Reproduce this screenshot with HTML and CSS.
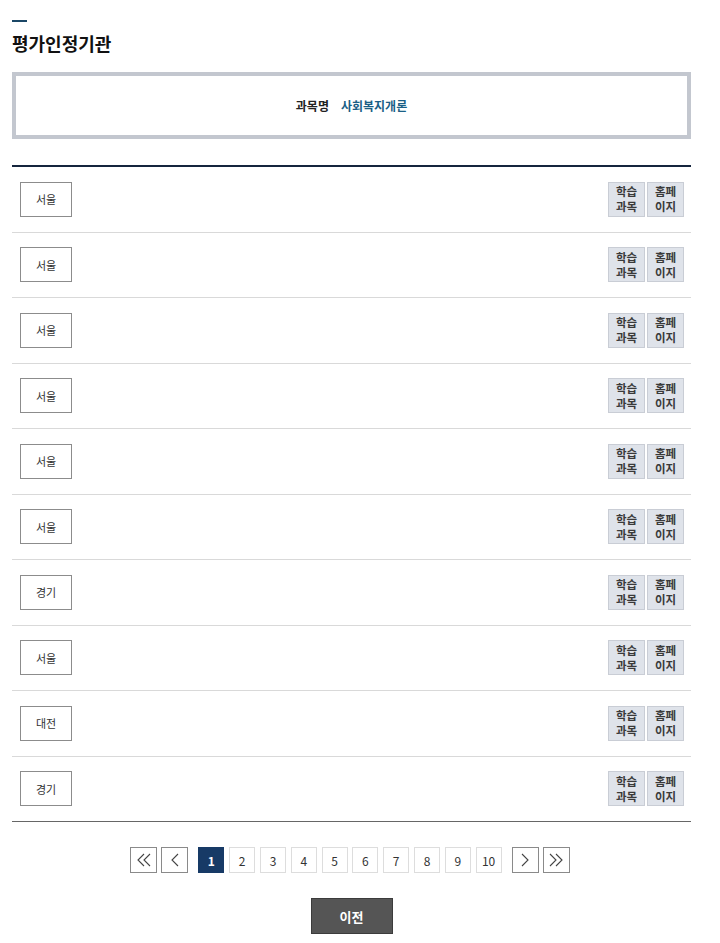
FILE: index.html
```html
<!DOCTYPE html>
<html>
<head>
    <meta charset="utf-8">
    <title>평가인정기관</title>
    <link rel="stylesheet" href="styles.css">
</head>
<body>
    <div class="wrap">
        <h1 class="title">평가인정기관</h1>

        <div class="subject-box">
            <span class="subject-label">과목명</span>
            <span class="subject-name">사회복지개론</span>
        </div>

        <ul class="org-list">
            <li class="org-row">
                <span class="region">서울</span>
                <div class="links"><a class="link-btn" href="#">학습<br>과목</a><a class="link-btn" href="#">홈페<br>이지</a></div>
            </li>
            <li class="org-row">
                <span class="region">서울</span>
                <div class="links"><a class="link-btn" href="#">학습<br>과목</a><a class="link-btn" href="#">홈페<br>이지</a></div>
            </li>
            <li class="org-row">
                <span class="region">서울</span>
                <div class="links"><a class="link-btn" href="#">학습<br>과목</a><a class="link-btn" href="#">홈페<br>이지</a></div>
            </li>
            <li class="org-row">
                <span class="region">서울</span>
                <div class="links"><a class="link-btn" href="#">학습<br>과목</a><a class="link-btn" href="#">홈페<br>이지</a></div>
            </li>
            <li class="org-row">
                <span class="region">서울</span>
                <div class="links"><a class="link-btn" href="#">학습<br>과목</a><a class="link-btn" href="#">홈페<br>이지</a></div>
            </li>
            <li class="org-row">
                <span class="region">서울</span>
                <div class="links"><a class="link-btn" href="#">학습<br>과목</a><a class="link-btn" href="#">홈페<br>이지</a></div>
            </li>
            <li class="org-row">
                <span class="region">경기</span>
                <div class="links"><a class="link-btn" href="#">학습<br>과목</a><a class="link-btn" href="#">홈페<br>이지</a></div>
            </li>
            <li class="org-row">
                <span class="region">서울</span>
                <div class="links"><a class="link-btn" href="#">학습<br>과목</a><a class="link-btn" href="#">홈페<br>이지</a></div>
            </li>
            <li class="org-row">
                <span class="region">대전</span>
                <div class="links"><a class="link-btn" href="#">학습<br>과목</a><a class="link-btn" href="#">홈페<br>이지</a></div>
            </li>
            <li class="org-row">
                <span class="region">경기</span>
                <div class="links"><a class="link-btn" href="#">학습<br>과목</a><a class="link-btn" href="#">홈페<br>이지</a></div>
            </li>
        </ul>

        <div class="paging">
            <div class="nav-group">
                <a class="nav-btn" href="#"><svg width="16" height="16" viewBox="0 0 16 16"><polyline points="8,2 2,8 8,14" /><polyline points="14,2 8,8 14,14" /></svg></a>
                <a class="nav-btn" href="#"><svg width="16" height="16" viewBox="0 0 16 16"><polyline points="11,2 5,8 11,14" /></svg></a>
            </div>
            <div class="pages">
                <a class="page on" href="#">1</a>
                <a class="page" href="#">2</a>
                <a class="page" href="#">3</a>
                <a class="page" href="#">4</a>
                <a class="page" href="#">5</a>
                <a class="page" href="#">6</a>
                <a class="page" href="#">7</a>
                <a class="page" href="#">8</a>
                <a class="page" href="#">9</a>
                <a class="page" href="#">10</a>
            </div>
            <div class="nav-group">
                <a class="nav-btn" href="#"><svg width="16" height="16" viewBox="0 0 16 16"><polyline points="5,2 11,8 5,14" /></svg></a>
                <a class="nav-btn" href="#"><svg width="16" height="16" viewBox="0 0 16 16"><polyline points="2,2 8,8 2,14" /><polyline points="8,2 14,8 8,14" /></svg></a>
            </div>
        </div>

        <div class="bottom">
            <a class="prev-btn" href="#">이전</a>
        </div>
    </div>
</body>
</html>
```

FILE: styles.css
```css
body {
    margin: 0;
    padding: 0;
    background: #fff;
    font-family: "Noto Sans CJK KR", "Noto Sans", sans-serif;
    color: #222;
}
a {
    text-decoration: none;
    color: inherit;
}
.wrap {
    width: 679px;
    margin-left: 12px;
    padding-top: 20px;
}
.title {
    margin: 0;
    font-size: 18px;
    font-weight: bold;
    line-height: 25px;
    color: #111;
}
.title::before {
    content: "";
    display: block;
    width: 15px;
    height: 2px;
    background: #1b4766;
    margin-bottom: 9px;
}
.subject-box {
    margin-top: 16px;
    height: 67px;
    box-sizing: border-box;
    border: 4px solid #c3c7cf;
    display: flex;
    justify-content: center;
    align-items: center;
    gap: 12px;
    font-size: 12px;
    font-weight: bold;
}
.subject-label {
    color: #222;
}
.subject-name {
    color: #1a5f86;
}
.org-list {
    list-style: none;
    margin: 26px 0 0;
    padding: 0;
    border-top: 2px solid #15253d;
}
.org-row {
    height: 65.5px;
    box-sizing: border-box;
    border-bottom: 1px solid #d9d9d9;
    display: flex;
    justify-content: space-between;
    align-items: center;
    padding: 0 7px 0 8px;
}
.org-row:last-child {
    border-bottom-color: #666;
}
.region {
    width: 52px;
    height: 35px;
    box-sizing: border-box;
    border: 1px solid #8c8c8c;
    display: flex;
    justify-content: center;
    align-items: center;
    font-size: 11px;
    color: #333;
}
.links {
    display: flex;
    gap: 2px;
}
.link-btn {
    width: 37px;
    height: 35px;
    box-sizing: border-box;
    background: #dfe3ea;
    border: 1px solid #c9cdd5;
    display: flex;
    justify-content: center;
    align-items: center;
    text-align: center;
    font-size: 11.5px;
    font-weight: bold;
    line-height: 15px;
    color: #3a3a3a;
}
.paging {
    margin-top: 25px;
    margin-left: -3px;
    display: flex;
    justify-content: center;
    gap: 10px;
}
.nav-group {
    display: flex;
    gap: 4px;
}
.pages {
    display: flex;
    gap: 4.8px;
}
.nav-btn,
.page {
    width: 26px;
    height: 26px;
    box-sizing: border-box;
    display: flex;
    justify-content: center;
    align-items: center;
    font-size: 12px;
    color: #333;
}
.nav-btn {
    width: 27px;
    border: 1px solid #8a8a8a;
}
.nav-btn svg {
    fill: none;
    stroke: #444;
    stroke-width: 1.1;
}
.page {
    border: 1px solid #ddd;
}
.page.on {
    background: #173a66;
    border-color: #173a66;
    color: #fff;
    font-weight: bold;
}
.bottom {
    margin-top: 25px;
    display: flex;
    justify-content: center;
}
.prev-btn {
    width: 82px;
    height: 36px;
    box-sizing: border-box;
    background: #555;
    border: 1px solid #3c3c3c;
    color: #fff;
    font-size: 13px;
    font-weight: bold;
    display: flex;
    justify-content: center;
    align-items: center;
}
```
